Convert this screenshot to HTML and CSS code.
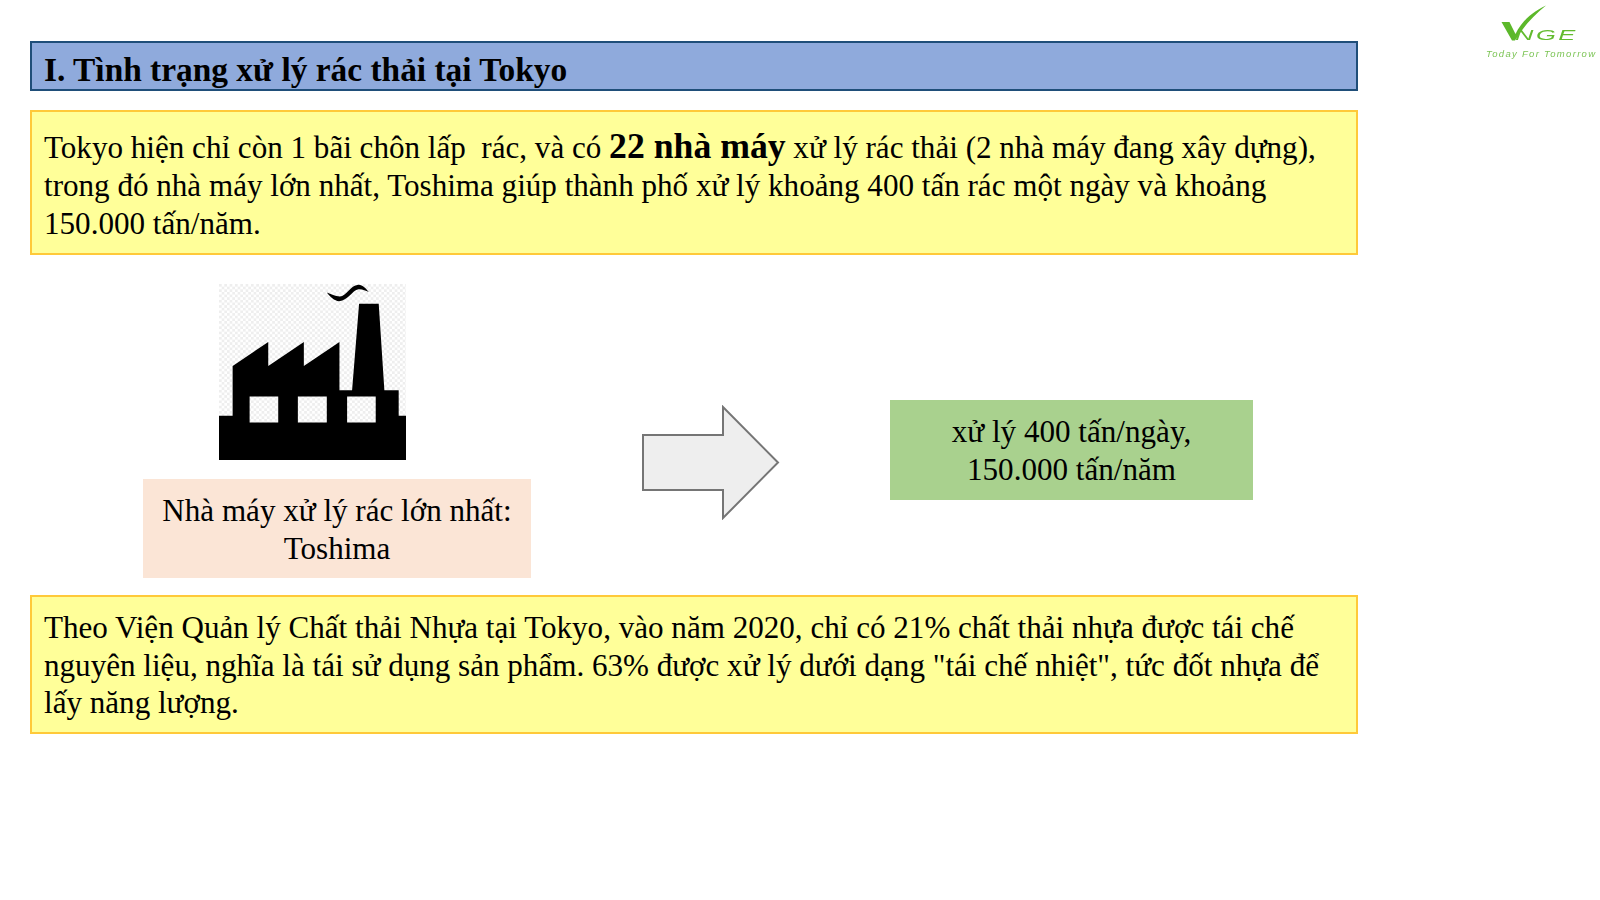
FILE: index.html
```html
<!DOCTYPE html>
<html lang="vi">
<head>
<meta charset="utf-8">
<title>Tình trạng xử lý rác thải tại Tokyo</title>
<link rel="stylesheet" href="styles.css">
</head>
<body>
<div class="logo">
  <svg class="logo-mark" viewBox="0 0 140 70" width="140" height="70" aria-hidden="true">
    <path d="M41.500 22 L49.500 22 L55.500 34 C61 22 72 12 86 5.500 C74 15 63 27 55 40.500 L52 40.500 Z" fill="#5cb82a"/>
  </svg>
  <span class="logo-nge">NGE</span>
  <span class="logo-tag">Today For Tomorrow</span>
</div>
<main class="slide">
  <h1 class="title">I. Tình trạng xử lý rác thải tại Tokyo</h1>
  <p class="note note-first">Tokyo hiện chỉ còn 1 bãi chôn lấp&nbsp; rác, và có <strong class="big">22 nhà máy</strong> xử lý rác thải (2 nhà máy đang xây dựng), trong đó nhà máy lớn nhất, Toshima giúp thành phố xử lý khoảng 400 tấn rác một ngày và khoảng 150.000 tấn/năm.</p>
  <section class="flow">
    <div class="plant">
      <svg class="factory" viewBox="55 40 562 532" width="187" height="176" preserveAspectRatio="none" aria-hidden="true">
        <defs>
          <pattern id="check" width="16" height="16" patternUnits="userSpaceOnUse" x="55" y="40">
            <rect width="16" height="16" fill="#ffffff"/>
            <rect width="8" height="8" fill="#eeeeee"/>
            <rect x="8" y="8" width="8" height="8" fill="#eeeeee"/>
          </pattern>
        </defs>
        <rect x="55" y="40" width="562" height="532" fill="url(#check)"/>
        <path fill-rule="evenodd" fill="#000" d="M55 572 V438 H96 V288 L203 215 V288 L310 215 V288 L417 215 V361 H455 L476 100 H535 L552 361 H595 V438 H617 V572 Z M147 380 V459 H233 V380 Z M292 380 V459 H379 V380 Z M440 380 V459 H526 V380 Z"/>
        <path fill="#000" d="M379 66 C392 70 404 78 418 78 C440 76 448 44 474 42 C488 42 497 54 505 64 C495 60 486 55 474 56 C456 58 444 90 416 92 C402 92 388 78 379 66 Z"/>
      </svg>
      <div class="plant-label">Nhà máy xử lý rác lớn nhất: Toshima</div>
    </div>
    <svg class="arrow" viewBox="0 0 140 115" width="140" height="115" aria-hidden="true">
      <path d="M2 30 H82 V2 L137 57.500 L82 113 V85 H2 Z" fill="#eeeeee" stroke="#757575" stroke-width="2"/>
    </svg>
    <div class="result">xử lý 400 tấn/ngày, 150.000 tấn/năm</div>
  </section>
  <p class="note note-last">Theo Viện Quản lý Chất thải Nhựa tại Tokyo, vào năm 2020, chỉ có 21% chất thải nhựa được tái chế nguyên liệu, nghĩa là tái sử dụng sản phẩm. 63% được xử lý dưới dạng "tái chế nhiệt", tức đốt nhựa để lấy năng lượng.</p>
</main>
</body>
</html>
```

FILE: styles.css
```css
html, body {
  margin: 0;
  padding: 0;
  background: #ffffff;
}

body {
  width: 1600px;
  height: 900px;
  overflow: hidden;
  position: relative;
  font-family: "Liberation Serif", "Times New Roman", serif;
  color: #000000;
}

.slide {
  display: flex;
  flex-direction: column;
  width: 1328px;
  padding: 41px 0 0 30px;
}

.title {
  margin: 0;
  height: 50px;
  box-sizing: border-box;
  padding: 5px 12px 0;
  background: #8faadc;
  border: 2px solid #1f4e79;
  font-size: 33.400px;
  line-height: 44px;
  font-weight: 700;
}

.note {
  margin: 0;
  box-sizing: border-box;
  padding: 0 12px;
  background: #ffff99;
  border: 2px solid #ffc939;
  font-size: 31.100px;
  line-height: 37.500px;
}

.note-first {
  margin-top: 19px;
  height: 145px;
  padding-top: 17px;
  line-height: 37.900px;
}

.big {
  font-size: 35.700px;
  line-height: 30px;
}

.note-last {
  height: 139px;
  padding-top: 12px;
}

.flow {
  display: flex;
  height: 340px;
}

.plant {
  width: 501px;
  padding: 29px 0 0 113px;
  box-sizing: border-box;
  display: flex;
  flex-direction: column;
}

.factory {
  display: block;
  margin-left: 76px;
}

.plant-label {
  width: 388px;
  height: 99px;
  box-sizing: border-box;
  margin-top: 19px;
  padding: 13px 10px 0;
  background: #fbe5d6;
  text-align: center;
  font-size: 31.100px;
  line-height: 37.500px;
}

.arrow {
  flex: none;
  margin: 150px 0 0 110px;
}

.result {
  width: 363px;
  height: 100px;
  box-sizing: border-box;
  flex: none;
  margin: 145px 0 0 109px;
  padding: 13px 50px 0;
  background: #a9d18e;
  text-align: center;
  font-size: 31.100px;
  line-height: 37.500px;
}

.logo {
  position: absolute;
  top: 0;
  left: 1460px;
  width: 140px;
  height: 70px;
  color: #62bb2e;
  font-family: "Liberation Sans", Arial, sans-serif;
  font-style: italic;
  filter: blur(0.400px);
}

.logo-mark {
  position: absolute;
  top: 0;
  left: 0;
}

.logo-nge {
  position: absolute;
  top: 27px;
  left: 55px;
  font-size: 15px;
  line-height: 15px;
  letter-spacing: 1.500px;
  transform: scaleX(1.700);
  transform-origin: left center;
}

.logo-tag {
  position: absolute;
  top: 47.500px;
  left: 26px;
  font-size: 9.500px;
  line-height: 12px;
  letter-spacing: 1.300px;
  color: #7cc455;
  white-space: nowrap;
}
```
